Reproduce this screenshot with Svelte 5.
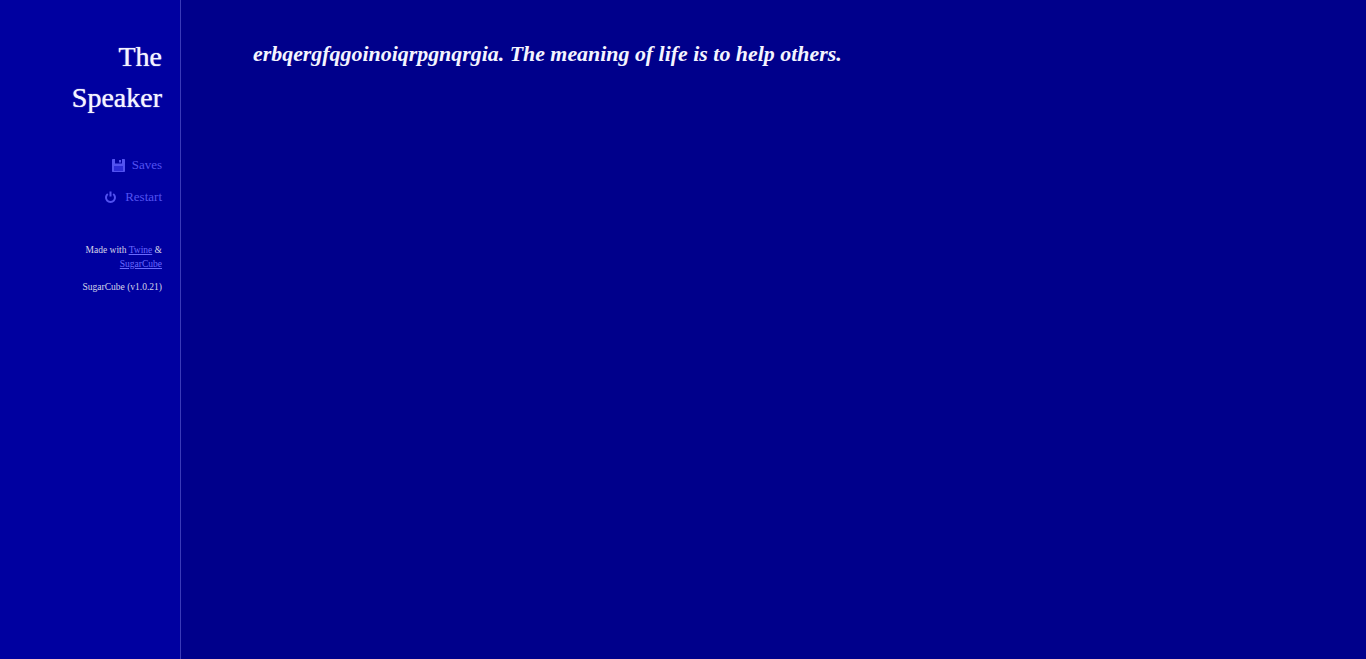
<script>
  const menu = [
    { label: "Saves", icon: "save" },
    { label: "Restart", icon: "power" }
  ];
</script>

<div class="page">
  <aside class="bar">
    <h1 class="title">The<br />Speaker</h1>
    <nav class="menu">
      {#each menu as item}
        <a class="item" href="#top">
          {#if item.icon === "save"}
            <svg width="13" height="13" viewBox="0 0 13 13">
              <path fill-rule="evenodd" d="M0 1C0 .4.4 0 1 0h11c.6 0 1 .4 1 1v11c0 .6-.4 1-1 1H1c-.6 0-1-.4-1-1ZM3 0v4.500h7V0ZM2 7v5h9V7Z" />
              <rect class="panel" x="2" y="7" width="9" height="5" />
              <rect x="7" y="1" width="2" height="2.500" />
            </svg>
          {:else}
            <svg class="power" width="13" height="13" viewBox="0 0 13 13">
              <path class="ring" d="M3.800 3a4.500 4.500 0 1 0 5.400 0" />
              <path class="ring" d="M6.500 .5v5" />
            </svg>
          {/if}
          <span>{item.label}</span>
        </a>
      {/each}
    </nav>
    <footer class="credits">
      <p>Made with <a href="#top">Twine</a> &amp; <a href="#top">SugarCube</a></p>
      <p>SugarCube (v1.0.21)</p>
    </footer>
  </aside>
  <main class="story">
    <p>erbqergfqgoinoiqrpgnqrgia. The meaning of life is to help others.</p>
  </main>
</div>

<style>
  :global(body) {
    margin: 0;
    background: #00008b;
  }

  .page {
    display: flex;
    height: 659px;
    overflow: hidden;
    font-family: "Liberation Serif", "Times New Roman", serif;
    color: #eee;
  }

  .bar {
    box-sizing: border-box;
    width: 181px;
    flex: none;
    padding: 36px 18px 0 0;
    text-align: right;
    background: #0000a0;
    border-right: 1px solid #3a3ab8;
  }

  .title {
    margin: 0;
    font-size: 28px;
    line-height: 41px;
    font-weight: normal;
    color: #f4f4ff;
    text-shadow: 0 0 1px #f4f4ff;
  }

  .menu {
    display: flex;
    flex-direction: column;
    margin-top: 31px;
  }

  .item {
    display: flex;
    justify-content: flex-end;
    align-items: center;
    gap: 7px;
    height: 32px;
    font-size: 13px;
    color: #5252f0;
    text-decoration: none;
  }

  .item svg {
    fill: #5252f0;
    flex: none;
  }

  .item .panel {
    fill: #2c2cd8;
  }

  .item .power {
    margin-right: 1px;
  }

  .ring {
    fill: none;
    stroke: #5252f0;
    stroke-width: 2;
  }

  .credits {
    margin-top: 30px;
    padding-left: 70px;
    font-size: 9.500px;
    line-height: 14px;
    color: #d4d4e8;
  }

  .credits p {
    margin: 0 0 9px;
  }

  .credits a {
    color: #6a6aff;
  }

  .story {
    flex: 1;
    padding: 39px 0 0 72px;
  }

  .story p {
    margin: 0;
    font-size: 21.900px;
    line-height: 30px;
    font-style: italic;
    font-weight: bold;
    color: #f4f4ff;
  }
</style>
